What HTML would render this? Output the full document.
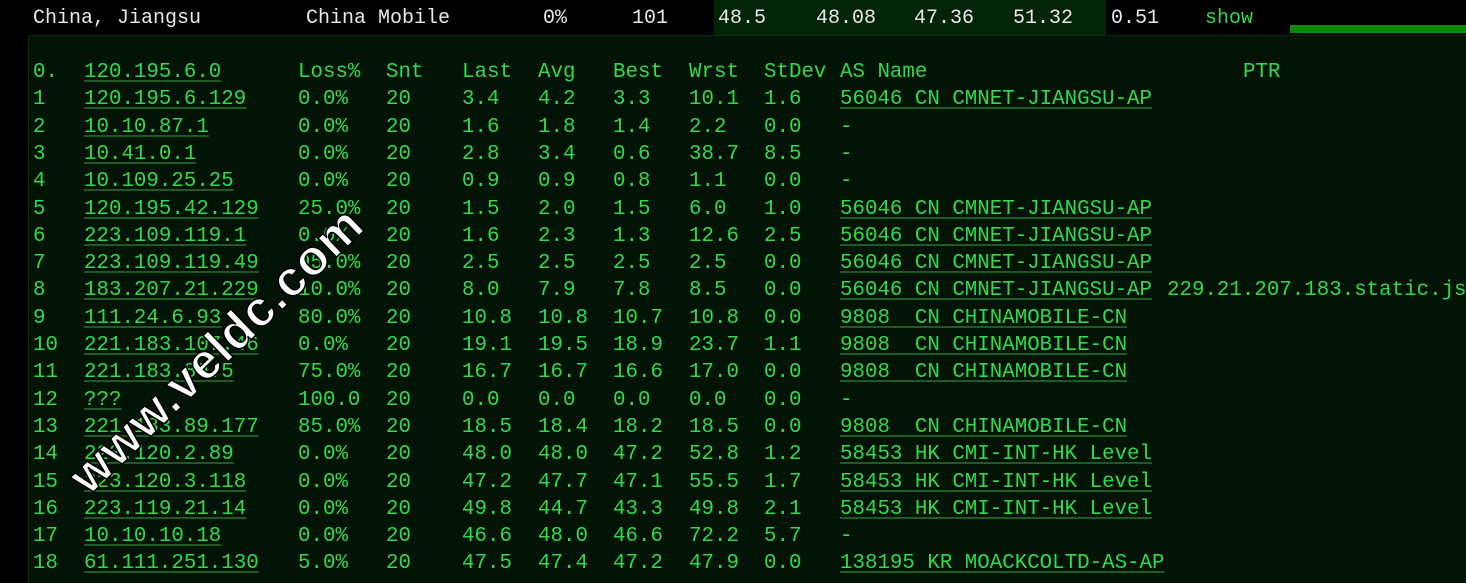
<!DOCTYPE html>
<html><head><meta charset="utf-8"><style>
body{margin:0;width:1466px;height:582px;background:#000;overflow:hidden;position:relative;font-family:"Liberation Mono",monospace;}
.top{position:absolute;top:0;left:0;width:1466px;height:35px;background:#000;}
.seg{position:absolute;top:0;left:714px;width:392px;height:35px;background:#032507;}
.bar{position:absolute;top:25px;left:1290px;width:176px;height:8px;background:#0a8a0a;}
.t{position:absolute;top:8px;font-size:20px;color:#e8e8e8;white-space:pre;line-height:22px;}
.main{position:absolute;top:35px;left:28px;width:1438px;height:547px;background:#021405;border-top:1px solid #0a2a0e;border-left:1px solid #0a2a0e;}
.c{position:absolute;font-size:20.8px;color:#33d84b;white-space:pre;line-height:24px;}
.u{text-decoration:underline;text-decoration-color:#1d5a25;text-decoration-thickness:2px;text-underline-offset:3px;}
.wm{position:absolute;left:216px;top:350px;transform:translate(-50%,-50%) rotate(-44deg);font-family:"Liberation Sans",sans-serif;font-weight:bold;font-size:50px;color:#fff;white-space:nowrap;-webkit-text-stroke:1.5px #000;letter-spacing:1px;}
</style></head><body>
<div class="top"></div><div class="seg"></div><div class="bar"></div>
<div class="t" style="left:33px">China, Jiangsu</div>
<div class="t" style="left:306px">China Mobile</div>
<div class="t" style="left:543px">0%</div>
<div class="t" style="left:632px">101</div>
<div class="t" style="left:718px">48.5</div>
<div class="t" style="left:816px">48.08</div>
<div class="t" style="left:914px">47.36</div>
<div class="t" style="left:1013px">51.32</div>
<div class="t" style="left:1111px">0.51</div>
<div class="t" style="left:1205px;color:#33d84b">show</div>
<div class="main"></div>
<div id="rows"></div>
<script>
var rows=[
["0.","120.195.6.0","Loss%","Snt","Last","Avg","Best","Wrst","StDev","AS Name",""],
["1","120.195.6.129","0.0%","20","3.4","4.2","3.3","10.1","1.6","56046 CN CMNET-JIANGSU-AP",""],
["2","10.10.87.1","0.0%","20","1.6","1.8","1.4","2.2","0.0","-",""],
["3","10.41.0.1","0.0%","20","2.8","3.4","0.6","38.7","8.5","-",""],
["4","10.109.25.25","0.0%","20","0.9","0.9","0.8","1.1","0.0","-",""],
["5","120.195.42.129","25.0%","20","1.5","2.0","1.5","6.0","1.0","56046 CN CMNET-JIANGSU-AP",""],
["6","223.109.119.1","0.0%","20","1.6","2.3","1.3","12.6","2.5","56046 CN CMNET-JIANGSU-AP",""],
["7","223.109.119.49","95.0%","20","2.5","2.5","2.5","2.5","0.0","56046 CN CMNET-JIANGSU-AP",""],
["8","183.207.21.229","10.0%","20","8.0","7.9","7.8","8.5","0.0","56046 CN CMNET-JIANGSU-AP","229.21.207.183.static.js"],
["9","111.24.6.93","80.0%","20","10.8","10.8","10.7","10.8","0.0","9808  CN CHINAMOBILE-CN",""],
["10","221.183.107.46","0.0%","20","19.1","19.5","18.9","23.7","1.1","9808  CN CHINAMOBILE-CN",""],
["11","221.183.89.5","75.0%","20","16.7","16.7","16.6","17.0","0.0","9808  CN CHINAMOBILE-CN",""],
["12","???","100.0","20","0.0","0.0","0.0","0.0","0.0","-",""],
["13","221.183.89.177","85.0%","20","18.5","18.4","18.2","18.5","0.0","9808  CN CHINAMOBILE-CN",""],
["14","223.120.2.89","0.0%","20","48.0","48.0","47.2","52.8","1.2","58453 HK CMI-INT-HK Level",""],
["15","223.120.3.118","0.0%","20","47.2","47.7","47.1","55.5","1.7","58453 HK CMI-INT-HK Level",""],
["16","223.119.21.14","0.0%","20","49.8","44.7","43.3","49.8","2.1","58453 HK CMI-INT-HK Level",""],
["17","10.10.10.18","0.0%","20","46.6","48.0","46.6","72.2","5.7","-",""],
["18","61.111.251.130","5.0%","20","47.5","47.4","47.2","47.9","0.0","138195 KR MOACKCOLTD-AS-AP",""]];
var xs=[33,84,298,386,462,538,613,689,764,840,1167];
var h="";
rows.forEach(function(r,i){var y=61+i*27.3;
r.forEach(function(v,j){if(!v)return;var cls="c";
if(j==1||(j==9&&i>0&&v!="-"))cls+=" u";
h+='<div class="'+cls+'" style="left:'+xs[j]+'px;top:'+y+'px">'+v+'</div>';});
if(i==0)h+='<div class="c" style="left:1243px;top:'+y+'px">PTR</div>';});
document.getElementById("rows").innerHTML=h;
</script>
<div class="wm">www.veldc.com</div>
</body></html>
